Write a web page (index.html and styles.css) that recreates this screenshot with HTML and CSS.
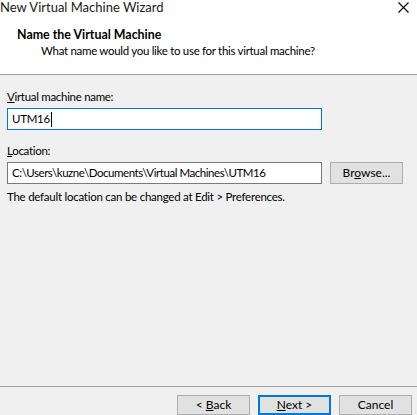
FILE: index.html
```html
<!DOCTYPE html>
<html>
<head>
<meta charset="utf-8">
<link rel="stylesheet" href="styles.css">
</head>
<body>
<div class="header">
  <div class="titlebar">
    <span class="title">New Virtual Machine Wizard</span>
    <svg class="close" width="11" height="11" viewBox="0 0 11 11"><path d="M0.5 0.5 L10.5 10.5 M10.5 0.5 L0.5 10.5" stroke="#000" stroke-width="1.1" fill="none"/></svg>
  </div>
  <div class="heading">Name the Virtual Machine</div>
  <div class="subheading">What name would you like to use for this virtual machine?</div>
</div>
<div class="content">
  <div class="label"><u>V</u>irtual machine name:</div>
  <div class="field focused">UTM16<span class="caret"></span></div>
  <div class="label second"><u>L</u>ocation:</div>
  <div class="row">
    <div class="field path">C:\Users\kuzne\Documents\Virtual Machines\UTM16</div>
    <div class="btn browse"><span>Br<u>o</u>wse...</span></div>
  </div>
  <div class="hint">The default location can be changed at Edit &gt; Preferences.</div>
</div>
<div class="footer">
  <div class="btn"><span>&lt; <u>B</u>ack</span></div>
  <div class="btn default"><span><u>N</u>ext &gt;</span></div>
  <div class="btn"><span>Cancel</span></div>
</div>
</body>
</html>
```
FILE: styles.css
```css
html, body {
  margin: 0;
  padding: 0;
}
body {
  width: 417px;
  height: 415px;
  background: #f0f0f0;
  font-family: Lato, "Noto Sans", sans-serif;
  font-size: 11.5px;
  letter-spacing: -0.3px;
  color: #000;
  display: flex;
  flex-direction: column;
  overflow: hidden;
}
.header {
  background: #fff;
  height: 74px;
  border-bottom: 1px solid #a0a0a0;
  box-sizing: content-box;
}
.titlebar {
  display: flex;
  justify-content: space-between;
  align-items: flex-start;
  height: 15px;
  line-height: 15px;
}
.title {
  font-size: 13px;
  letter-spacing: 0;
  color: #1a1a1a;
}
.close {
  margin-top: 2px;
  margin-right: 8px;
}
.heading {
  margin-top: 12px;
  padding-left: 17px;
  font-weight: bold;
  font-size: 12.4px;
  letter-spacing: 0;
  line-height: 16px;
}
.subheading {
  padding-left: 41px;
  line-height: 16px;
}
.content {
  padding: 14px 0 0 7px;
}
.label {
  line-height: 16px;
}
.label.second {
  margin-top: 13px;
}
.field {
  margin-top: 3px;
  width: 315px;
  height: 22px;
  box-sizing: border-box;
  border: 1px solid #7a7a7a;
  background: #fff;
  padding-left: 4px;
  line-height: 20px;
  white-space: nowrap;
  display: flex;
  align-items: center;
}
.field.path {
  letter-spacing: -0.45px;
}
.field.focused {
  border-color: #0078d7;
}
.caret {
  display: inline-block;
  width: 1px;
  height: 15px;
  background: #000;
  margin-left: 1px;
}
.row {
  display: flex;
  align-items: flex-start;
  gap: 8px;
}
.btn {
  width: 73px;
  height: 20px;
  box-sizing: border-box;
  border: 1px solid #adadad;
  background: #e1e1e1;
  display: flex;
  align-items: center;
  justify-content: center;
  line-height: 16px;
  white-space: pre;
  letter-spacing: 0;
  font-size: 12px;
}
.btn.browse {
  margin-top: 3px;
  height: 22px;
}
.btn.default {
  border: 2px solid #0078d7;
}
.hint {
  margin-top: 5px;
  line-height: 16px;
  letter-spacing: -0.25px;
}
.footer {
  margin-top: auto;
  border-top: 1px solid #a0a0a0;
  height: 29px;
  box-sizing: border-box;
  padding: 8px 5px 0 0;
  display: flex;
  justify-content: flex-end;
  align-items: flex-start;
  gap: 8px;
}
```
